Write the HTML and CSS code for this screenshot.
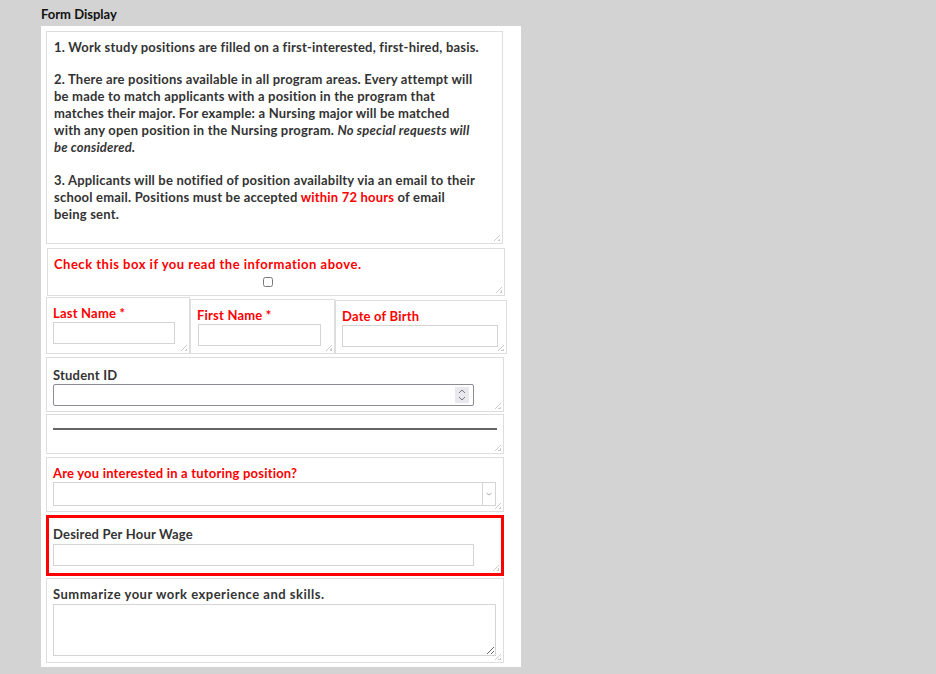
FILE: index.html
```html
<!DOCTYPE html>
<html lang="en">
<head>
    <meta charset="UTF-8">
    <meta name="viewport" content="width=device-width, initial-scale=1.0">
    <title>Form Display</title>
    <link rel="stylesheet" href="styles.css">
</head>
<body>
    <h2 class="page-title">Form Display</h2>
    <div class="form-panel">
        <div class="field-box info-box">
            <p>1. Work study positions are filled on a first-interested, first-hired, basis.</p>
            <p>2. There are positions available in all program areas. Every attempt will<br>
            be made to match applicants with a position in the program that<br>
            matches their major. For example: a Nursing major will be matched<br>
            with any open position in the Nursing program. <em>No special requests will<br>
            be considered.</em></p>
            <p>3. Applicants will be notified of position availabilty via an email to their<br>
            school email. Positions must be accepted <span class="red">within 72 hours</span> of email<br>
            being sent.</p>
        </div>

        <div class="field-box check-box">
            <label class="field-label red wide" for="readInfo">Check this box if you read the information above.</label>
            <div class="check-row"><input type="checkbox" id="readInfo"></div>
        </div>

        <div class="name-row">
            <div class="field-box name-last">
                <label class="field-label red">Last Name *</label>
                <input type="text" class="text-input">
            </div>
            <div class="field-box name-first">
                <label class="field-label red">First Name *</label>
                <input type="text" class="text-input">
            </div>
            <div class="field-box name-dob">
                <label class="field-label red">Date of Birth</label>
                <input type="text" class="text-input">
            </div>
        </div>

        <div class="field-box student-box">
            <label class="field-label">Student ID</label>
            <div class="number-wrap">
                <input type="text" class="text-input number-input">
                <span class="spinner">
                    <svg width="10" height="14" viewBox="0 0 10 14"><path d="M2 5 L5 2 L8 5 M2 9 L5 12 L8 9" fill="none" stroke="#777" stroke-width="1"/></svg>
                </span>
            </div>
        </div>

        <div class="field-box divider-box">
            <hr class="divider">
        </div>

        <div class="field-box tutor-box">
            <label class="field-label red">Are you interested in a tutoring position?</label>
            <div class="select-wrap">
                <select class="select-input"><option></option></select>
                <span class="select-arrow">
                    <svg width="8" height="6" viewBox="0 0 8 6"><path d="M1.5 2 L4 4 L6.5 2" fill="none" stroke="#aaa" stroke-width="1"/></svg>
                </span>
            </div>
        </div>

        <div class="field-box wage-box">
            <label class="field-label">Desired Per Hour Wage</label>
            <input type="text" class="text-input wage-input">
        </div>

        <div class="field-box summary-box">
            <label class="field-label wide">Summarize your work experience and skills.</label>
            <textarea class="text-area"></textarea>
        </div>
    </div>
</body>
</html>
```

FILE: styles.css
```css
body {
    margin: 0;
    padding: 0 0 0 41px;
    background: #d3d3d3;
    font-family: 'Lato', 'DejaVu Sans', sans-serif;
    font-weight: bold;
    color: #333;
    letter-spacing: 0.2px;
    min-height: 674px;
    box-sizing: border-box;
}

.page-title {
    font-size: 13px;
    margin: 0;
    padding-top: 6px;
    height: 20px;
    color: #111;
    letter-spacing: 0;
}

.form-panel {
    background: white;
    width: 480px;
    padding: 5px 0 4px 5px;
    box-sizing: border-box;
}

.red {
    color: #ff0000;
}

.wide {
    letter-spacing: 0.5px;
}

.field-box {
    position: relative;
    border: 1px solid #ddd;
    box-sizing: border-box;
    padding: 0 6px;
    background-color: white;
}

/* resize grip in the corner of each box */
.field-box::after {
    content: "";
    position: absolute;
    right: 2px;
    bottom: 2px;
    width: 6px;
    height: 6px;
    background: linear-gradient(135deg, transparent 45%, #ccc 45%, #ccc 55%, transparent 55%, transparent 75%, #ccc 75%);
}

.field-label {
    display: block;
    font-size: 13px;
    line-height: 17px;
}

.info-box {
    width: 457px;
    height: 213px;
    padding: 7px 7px 0 7px;
    font-size: 13px;
    line-height: 17px;
    white-space: nowrap;
}

.info-box p {
    margin: 0 0 16px 0;
}

.info-box p:first-child {
    margin-bottom: 15px;
}

.info-box em {
    font-style: italic;
}

.check-box {
    width: 458px;
    height: 48px;
    margin: 4px 0 0 1px;
    padding-top: 7px;
}

.check-row {
    height: 10px;
    margin-top: 4px;
    padding-left: 209px;
}

.check-row input {
    display: block;
    margin: 0;
    width: 10px;
    height: 10px;
}

.name-row {
    display: flex;
    align-items: flex-end;
}

.name-last {
    width: 144px;
    height: 57px;
    margin-top: 1px;
    padding-top: 7px;
}

.name-first {
    width: 145px;
    height: 55px;
    padding-top: 7px;
}

.name-dob {
    width: 172px;
    height: 54px;
    padding-top: 7px;
}

.text-input {
    display: block;
    box-sizing: border-box;
    border: 1px solid #d4d4d4;
    height: 22px;
    margin: 0;
    padding: 2px 4px;
    font-family: inherit;
}

.name-last .text-input {
    width: 122px;
}

.name-first .text-input {
    width: 123px;
    margin-left: 1px;
}

.name-dob .text-input {
    width: 156px;
}

.student-box {
    width: 458px;
    height: 55px;
    margin-top: 3px;
    padding-top: 9px;
}

.number-wrap {
    position: relative;
    width: 421px;
}

.number-input {
    width: 421px;
    border-color: #8c8c96;
    border-radius: 2px;
}

.spinner {
    position: absolute;
    right: 5px;
    top: 3px;
    width: 14px;
    height: 16px;
    background: #e8e8ee;
    display: flex;
    align-items: center;
    justify-content: center;
}

.divider-box {
    width: 458px;
    height: 40px;
    margin-top: 2px;
    padding-top: 13px;
}

.divider {
    margin: 0;
    border: none;
    height: 2px;
    background: #666;
    width: 444px;
}

.tutor-box {
    width: 458px;
    height: 55px;
    margin-top: 3px;
    padding-top: 7px;
}

.select-wrap {
    position: relative;
    width: 443px;
}

.select-input {
    display: block;
    appearance: none;
    width: 443px;
    height: 24px;
    margin: 0;
    border: 1px solid #d4d4d4;
    background: white;
    border-radius: 0;
}

.select-arrow {
    position: absolute;
    right: 1px;
    top: 1px;
    width: 12px;
    height: 22px;
    border-left: 1px solid #d4d4d4;
    display: flex;
    align-items: center;
    justify-content: center;
}

.wage-box {
    width: 458px;
    height: 61px;
    margin-top: 3px;
    border: 3px solid #ff0000;
    padding: 8px 4px 0 4px;
}

.wage-input {
    width: 421px;
    margin-top: 1px;
}

.summary-box {
    width: 458px;
    height: 85px;
    margin-top: 2px;
    padding-top: 7px;
}

.text-area {
    display: block;
    box-sizing: border-box;
    width: 443px;
    height: 52px;
    margin: 1px 0 0 0;
    border: 1px solid #d4d4d4;
    resize: both;
}
```
